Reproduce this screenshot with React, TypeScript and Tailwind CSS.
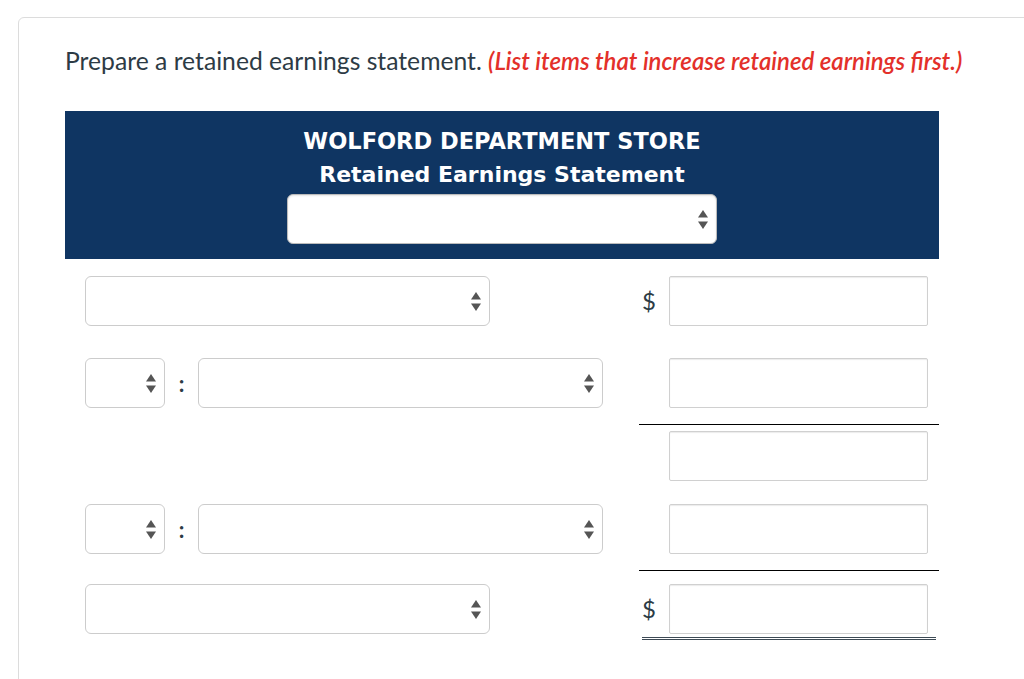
function Arrows() {
  return (
    <svg width="10" height="19" viewBox="0 0 10 19" className="shrink-0">
      <polygon points="5,0 10,7.5 0,7.5" fill="#555" />
      <polygon points="0,11.5 10,11.5 5,19" fill="#555" />
    </svg>
  );
}

function Select({ width }: { width: string }) {
  return (
    <div
      className={`${width} flex h-[50px] shrink-0 items-center justify-end rounded-[6px] border border-[#cccccc] bg-white pr-[8px]`}
    >
      <Arrows />
    </div>
  );
}

function AmountInput() {
  return (
    <div className="h-[50px] w-[259px] shrink-0 rounded-[2px] border border-[#d0d0d0] bg-white shadow-[inset_0_1px_1px_rgba(0,0,0,0.08)]" />
  );
}

function Amount({ dollar }: { dollar?: boolean }) {
  return (
    <div className="flex w-[300px] shrink-0 items-center">
      <span className="w-[30px] pl-[3px] text-[24px] leading-none text-[#2d3b45]">
        {dollar ? "$" : ""}
      </span>
      <AmountInput />
    </div>
  );
}

function Colon() {
  return (
    <span className="flex w-[33px] justify-center text-[22px] font-bold text-[#2d3b45]">:</span>
  );
}

export default function App() {
  return (
    <div
      className="h-[679px] w-full overflow-hidden bg-white"
      style={{ fontFamily: "Lato, 'Open Sans', sans-serif" }}
    >
      <div className="ml-[18px] mt-[17px] h-[700px] w-[1040px] rounded-[6px] border border-[#dcdcdc] pl-[46px] pt-[28px]">
        {/* instruction */}
        <p className="text-[24.7px] leading-[29px] text-[#2d3b45]">
          Prepare a retained earnings statement.{" "}
          <em className="text-[24px] font-semibold text-[#e3302a]">
            (List items that increase retained earnings first.)
          </em>
        </p>

        <div className="w-[874px]">
          {/* header */}
          <div
            className="mt-[36px] flex flex-col items-center bg-[#0f3562] pb-[15px] pt-[14px]"
            style={{ fontFamily: "'DejaVu Sans', Verdana, sans-serif" }}
          >
            <div className="text-[22.5px] font-bold leading-[33px] text-white">
              WOLFORD DEPARTMENT STORE
            </div>
            <div className="text-[22px] font-bold leading-[33px] text-white">
              Retained Earnings Statement
            </div>
            <div className="mt-[3px] flex h-[50px] w-[430px] items-center justify-end rounded-[6px] border border-[#bbbbbb] bg-white pr-[8px] shadow-[inset_0_1px_2px_rgba(0,0,0,0.1)]">
              <Arrows />
            </div>
          </div>

          {/* row 1 */}
          <div className="mt-[17px] flex items-center">
            <div className="flex w-[574px] pl-[20px]">
              <Select width="w-[405px]" />
            </div>
            <Amount dollar />
          </div>

          {/* row 2 */}
          <div className="mt-[32px] flex items-center">
            <div className="flex w-[574px] items-center pl-[20px]">
              <Select width="w-[80px]" />
              <Colon />
              <Select width="w-[405px]" />
            </div>
            <Amount />
          </div>

          <div className="ml-[574px] mt-[16px] w-[300px] border-t border-black" />

          {/* row 3 */}
          <div className="mt-[6px] flex items-center">
            <div className="w-[574px]" />
            <Amount />
          </div>

          {/* row 4 */}
          <div className="mt-[23px] flex items-center">
            <div className="flex w-[574px] items-center pl-[20px]">
              <Select width="w-[80px]" />
              <Colon />
              <Select width="w-[405px]" />
            </div>
            <Amount />
          </div>

          <div className="ml-[574px] mt-[16px] w-[300px] border-t border-black" />

          {/* row 5 */}
          <div className="mt-[13px] flex items-center">
            <div className="flex w-[574px] pl-[20px]">
              <Select width="w-[405px]" />
            </div>
            <Amount dollar />
          </div>

          <div className="ml-[577px] mt-[3px] h-[3px] w-[294px] border-y border-[#3d4a55]" />
        </div>
      </div>
    </div>
  );
}
